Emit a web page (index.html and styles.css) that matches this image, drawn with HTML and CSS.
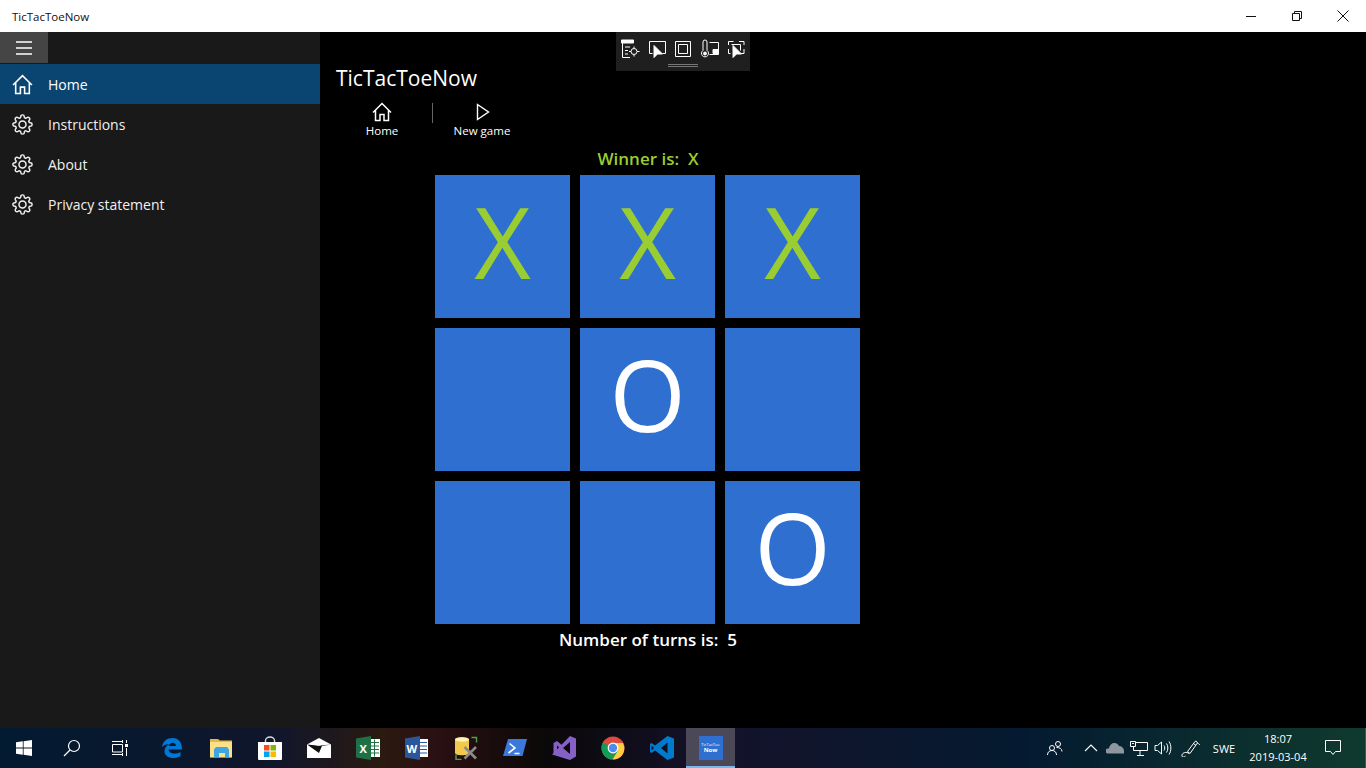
FILE: index.html
```html
<!DOCTYPE html>
<html lang="en">
  <head>
    <meta charset="utf-8" />
    <meta name="viewport" content="width=device-width, initial-scale=1" />
    <title>TicTacToeNow</title>
    <link rel="stylesheet" href="styles.css">
  </head>
  <body>
    <!-- shared icons -->
    <svg class="defs" width="0" height="0">
      <symbol id="gear" viewBox="0 0 24 24">
        <path fill="none" stroke="currentColor" stroke-width="1.7" d="M19.4 15a1.65 1.65 0 0 0 .33 1.82l.06.06a2 2 0 0 1 0 2.83 2 2 0 0 1-2.83 0l-.06-.06a1.65 1.65 0 0 0-1.82-.33 1.65 1.65 0 0 0-1 1.51V21a2 2 0 0 1-2 2 2 2 0 0 1-2-2v-.09A1.65 1.65 0 0 0 9 19.4a1.65 1.65 0 0 0-1.82.33l-.06.06a2 2 0 0 1-2.83 0 2 2 0 0 1 0-2.83l.06-.06a1.65 1.65 0 0 0 .33-1.82 1.65 1.65 0 0 0-1.51-1H3a2 2 0 0 1-2-2 2 2 0 0 1 2-2h.09A1.65 1.65 0 0 0 4.6 9a1.65 1.65 0 0 0-.33-1.82l-.06-.06a2 2 0 0 1 0-2.83 2 2 0 0 1 2.83 0l.06.06a1.65 1.65 0 0 0 1.82.33H9a1.65 1.65 0 0 0 1-1.51V3a2 2 0 0 1 2-2 2 2 0 0 1 2 2v.09a1.65 1.65 0 0 0 1 1.51 1.65 1.65 0 0 0 1.82-.33l.06-.06a2 2 0 0 1 2.83 0 2 2 0 0 1 0 2.83l-.06.06a1.65 1.65 0 0 0-.33 1.82V9a1.65 1.65 0 0 0 1.51 1H21a2 2 0 0 1 2 2 2 2 0 0 1-2 2h-.09a1.65 1.65 0 0 0-1.51 1z"/>
        <circle cx="12" cy="12" r="4" fill="none" stroke="currentColor" stroke-width="1.7"/>
      </symbol>
      <symbol id="house" viewBox="0 0 20 20">
        <path fill="none" stroke="currentColor" stroke-width="1.5" d="M1 10.5 10 1.500l9 9M3.500 8.500V18.500H8V12.500H12V18.500H16.500V8.500"/>
      </symbol>
    </svg>

    <div class="titlebar">
      <span class="app-title">TicTacToeNow</span>
      <div class="win-buttons">
        <div class="win-btn"><svg width="12" height="12" viewBox="0 0 12 12"><path d="M1 6.500h10" stroke="#111" fill="none"/></svg></div>
        <div class="win-btn"><svg width="12" height="12" viewBox="0 0 12 12"><path d="M1.500 3.500h7v7h-7zM3.500 3.500v-2h7v7h-2" stroke="#111" fill="none"/></svg></div>
        <div class="win-btn"><svg width="12" height="12" viewBox="0 0 12 12"><path d="M.5.500l11 11M11.500.500l-11 11" stroke="#111" fill="none"/></svg></div>
      </div>
    </div>

    <div class="app">
      <nav class="sidebar">
        <div class="hamburger">
          <svg width="16" height="14" viewBox="0 0 16 14"><path d="M0 1h16M0 7h16M0 13h16" stroke="#fff" stroke-width="1.500" fill="none"/></svg>
        </div>
        <a class="nav-item selected"><svg class="nav-icon" viewBox="0 0 20 20"><use href="#house"/></svg>Home</a>
        <a class="nav-item"><svg class="nav-icon"><use href="#gear"/></svg>Instructions</a>
        <a class="nav-item"><svg class="nav-icon"><use href="#gear"/></svg>About</a>
        <a class="nav-item"><svg class="nav-icon"><use href="#gear"/></svg>Privacy statement</a>
      </nav>

      <main class="content">
        <h1 class="page-title">TicTacToeNow</h1>
        <div class="commands">
          <div class="command">
            <svg width="20" height="20"><use href="#house"/></svg>
            <span>Home</span>
          </div>
          <div class="divider"></div>
          <div class="command">
            <svg width="20" height="20" viewBox="0 0 20 20"><path d="M5.500 2.500v15l11-7.500z" fill="none" stroke="#fff" stroke-width="1.400"/></svg>
            <span>New game</span>
          </div>
        </div>

        <div class="game">
          <div class="winner">Winner is:&nbsp; X</div>
          <div class="board">
            <div class="cell x">X</div>
            <div class="cell x">X</div>
            <div class="cell x">X</div>
            <div class="cell"></div>
            <div class="cell o">O</div>
            <div class="cell"></div>
            <div class="cell"></div>
            <div class="cell"></div>
            <div class="cell o">O</div>
          </div>
          <div class="turns">Number of turns is:&nbsp; 5</div>
        </div>

        <!-- debug toolbar floats over the page -->
        <div class="debug-bar">
          <div class="debug-icons">
            <svg width="20" height="20" viewBox="0 0 20 20" fill="none" stroke="#fff"><path d="M1.500 1h12v3h-12z" fill="#fff"/><path d="M2.500 4v14.500h7.500M5 8h5M5 11.500h3M5 15h3"/><circle cx="14" cy="12.500" r="3"/><path d="M14 7.500v2M14 15.500v2M9 12.500h2M17 12.500h2.500"/></svg>
            <svg width="20" height="20" viewBox="0 0 20 20" fill="none" stroke="#fff"><path d="M5.500 14.500h-3v-12h16v12h-3"/><path d="M7 6.500v12l3.500-3.500h5z" fill="#fff"/></svg>
            <svg width="20" height="20" viewBox="0 0 20 20" fill="none" stroke="#fff"><path d="M2.500 2.500h15v15h-15z"/><path d="M5.500 5.500h9v9h-9z"/></svg>
            <svg width="20" height="20" viewBox="0 0 20 20" fill="none" stroke="#fff"><path d="M3 11.500V3a2 2 0 0 1 4 0v8.500a3.500 3.500 0 1 1-4 0z"/><circle cx="5" cy="14.500" r="1.500" fill="#fff"/><path d="M9.500 3.500h9v12h-9"/><path d="M13 10.500h5v4h-5z" fill="#fff"/></svg>
            <svg width="20" height="20" viewBox="0 0 20 20" fill="none" stroke="#fff"><path d="M2.500 6V2.500h5M13 2.500h5V6M2.500 10v4.500h2M18 10v4.500h-3M5.500 5.500h9v6"/><path d="M7 6.500v12l3.500-3.500h5z" fill="#fff"/></svg>
          </div>
          <div class="grip"></div>
        </div>
      </main>
    </div>

    <footer class="taskbar">
      <div class="tb-sys">
        <svg width="16" height="16" viewBox="0 0 16 16" fill="#fff"><path d="M0 2.300 6.800 1.300v6.300H0zM7.600 1.200 16 0v7.600H7.600zM0 8.400h6.800v6.300L0 13.700zM7.600 8.400H16V16l-8.400-1.200z"/></svg>
      </div>
      <div class="tb-sys">
        <svg width="18" height="18" viewBox="0 0 18 18" fill="none" stroke="#fff" stroke-width="1.200"><circle cx="11" cy="7" r="5.500"/><path d="M7 11 1 17"/></svg>
      </div>
      <div class="tb-sys">
        <svg width="16" height="16" viewBox="0 0 16 16" fill="none" stroke="#fff"><path d="M0 1.500h10M10.500 0v3M.5 4.500h10v7.500H.5zM0 14.500h10M10.500 13v3M14.500 0v3M14.500 8v8"/><path d="M13 4h3v3h-3z" fill="#fff" stroke="none"/></svg>
      </div>

      <div class="tb-app first">
        <!-- edge -->
        <svg width="24" height="24" viewBox="0 0 24 24"><path fill="#0078d7" d="M2 11C3 5 7 2 12.500 2 18.500 2 22 6 22 13.500H8.500c.3 4 6.500 5.500 12 2.400v4.300C14 23.500 4.500 22.500 4.500 15c0-3 2-5.500 5-7-2.500 0-6 1-7.500 3zM8.800 10h7.200c0-4.500-6.500-4.500-7.200 0z"/></svg>
      </div>
      <div class="tb-app">
        <!-- explorer -->
        <svg width="24" height="24" viewBox="0 0 24 24"><path fill="#e8b83e" d="M1 3h8l2 1.500h12V8H1z"/><path fill="#fbe08a" d="M1 6h22v15H1z"/><path fill="#3ea6e0" d="M7 11h11l2 2.500V21h-4v-4H10v4H5v-7.500z"/><path fill="#d2a13c" d="M1 21h22v.8H1z"/></svg>
      </div>
      <div class="tb-app">
        <!-- store -->
        <svg width="24" height="24" viewBox="0 0 24 24"><path fill="none" stroke="#ddd" stroke-width="1.400" d="M7.500 7V4.500a4.500 3.500 0 0 1 9 0V7"/><path fill="#fff" d="M0 6h24v17a1 1 0 0 1-1 1H1a1 1 0 0 1-1-1z"/><path fill="#f25022" d="M6 9h5.500v5.500H6z"/><path fill="#7fba00" d="M12.500 9H18v5.500h-5.500z"/><path fill="#00a4ef" d="M6 15.500h5.500V21H6z"/><path fill="#ffb900" d="M12.500 15.500H18V21h-5.500z"/></svg>
      </div>
      <div class="tb-app">
        <!-- mail -->
        <svg width="24" height="24" viewBox="0 0 24 24"><path fill="#fff" d="M0 8.500 12 2l12 6.500V22H0z"/><path fill="#111" d="M0 8.500 12 17l3-7zM24 8.500 15 10H8z"/></svg>
      </div>
      <div class="tb-app">
        <!-- excel -->
        <svg width="24" height="24" viewBox="0 0 24 24"><path fill="#fff" d="M13 3h11v18H13z"/><path fill="none" stroke="#1f7145" d="M14 6.500h9M14 10h9M14 13.500h9M14 17h9M18.500 3.500v17"/><path fill="#1f7145" d="M0 2.500 15 0v24L0 21.500z"/><text class="icon-letter" x="3.500" y="16.500">X</text></svg>
      </div>
      <div class="tb-app">
        <!-- word -->
        <svg width="24" height="24" viewBox="0 0 24 24"><path fill="#fff" d="M13 3h10v18H13z"/><path fill="none" stroke="#2b579a" d="M14 6.500h8M14 10h8M14 13.500h8M14 17h8"/><path fill="#2b579a" d="M0 2.500 15 0v24L0 21.500z"/><text class="icon-letter" x="1.500" y="16.500">W</text></svg>
      </div>
      <div class="tb-app">
        <!-- sql tools -->
        <svg width="24" height="24" viewBox="0 0 24 24"><path fill="#f2c94c" d="M1 3.500C1 .5 15 .5 15 3.500V17C15 20 1 20 1 17z"/><ellipse cx="8" cy="3.500" rx="7" ry="2.200" fill="#fff3b0"/><path fill="none" stroke="#4aa54a" stroke-width="1.400" d="M17.500 1.500h5v5M2 18.500v5h5.500"/><path fill="none" stroke="#8a8a8a" stroke-width="2.600" d="M10.500 22.500 22 11M10.500 11 22 22.500"/></svg>
      </div>
      <div class="tb-app">
        <!-- powershell -->
        <svg width="24" height="24" viewBox="0 0 24 24"><path fill="#3b78dc" d="M5 3h19l-4.500 17H0z"/><path fill="none" stroke="#fff" stroke-width="1.600" d="M6.500 7.500 12 12l-6.500 5M11.500 17.500h5"/></svg>
      </div>
      <div class="tb-app">
        <!-- visual studio -->
        <svg width="24" height="24" viewBox="0 0 24 24"><path fill="#8661c5" d="M18 0l6 2.500v18L18 24 0 18.500zM18 6l-7 6 7 6z"/><path fill="#8661c5" d="M1.500 7 5 5l6 5-2.500 2.500L5 9.500v5l3.500-2 2.500 2.500-6 4.500-3.500-2z"/></svg>
      </div>
      <div class="tb-app">
        <!-- chrome -->
        <svg width="24" height="24" viewBox="0 0 24 24"><circle cx="12" cy="12" r="11.500" fill="#dd4b3e"/><path fill="#ffcd40" d="M12 12h11.300C23.600 19 18 23.500 12 23.500z"/><path fill="#ffcd40" d="M12 7h10l1.500 5H12z"/><path fill="#109d58" d="M1.800 6.700 12 12l-.5 11.500C5 23.300.500 18 .500 12c0-2 .5-3.700 1.300-5.300z"/><path fill="#109d58" d="m12 12 5 2.500-5.500 9z"/><circle cx="12" cy="12" r="5.400" fill="#fff"/><circle cx="12" cy="12" r="4.200" fill="#4a8cf0"/></svg>
      </div>
      <div class="tb-app">
        <!-- vscode -->
        <svg width="24" height="24" viewBox="0 0 24 24"><path fill="#007acc" d="M17.500 0 24 2.500v19L17.500 24 5 14.500 1.500 17 0 16V8l1.500-1L5 9.500zM17.500 6.500 11 12l6.500 5.500zM1.500 9.500v5L4 12z"/></svg>
      </div>
      <div class="tb-app active">
        <div class="app-tile"><span class="tile-small">TicTacToe</span><span class="tile-big">Now</span></div>
      </div>

      <div class="tray">
        <div class="tray-item people">
          <svg width="16" height="16" viewBox="0 0 16 16" fill="none" stroke="#fff"><circle cx="5" cy="8" r="2.500"/><path d="M.5 15c0-3 2-4.500 4.500-4.500S9.500 12 9.500 15"/><circle cx="11" cy="4" r="2.500"/><path d="M9.500 7.500c3 0 5.500 1 5.500 4"/></svg>
        </div>
        <div class="tray-item">
          <svg width="14" height="14" viewBox="0 0 14 14" fill="none" stroke="#fff" stroke-width="1.100"><path d="M1 10 7 4l6 6"/></svg>
        </div>
        <div class="tray-item">
          <svg width="18" height="14" viewBox="0 0 18 14" fill="#8e979e"><path d="M2 12.500a2.500 2.500 0 0 1 0-5h1C3.500 4 6 2 8.500 2c2 0 3.500 1 4.500 3 2.500 0 4.500 1.500 5 4.500v3z"/></svg>
        </div>
        <div class="tray-item">
          <svg width="18" height="16" viewBox="0 0 18 16" fill="none" stroke="#fff"><path d="M5.500 2.500h12v8h-14V7M7 15.500h7M10 10.500v5"/><path d="M.5 1.500h5v5h-5z"/><path d="M2 3.500h2" /></svg>
        </div>
        <div class="tray-item">
          <svg width="18" height="16" viewBox="0 0 18 16" fill="none" stroke="#fff"><path d="M1 5.500h2.500L7.500 2v12l-4-3.500H1zM10 5.500c1 1.500 1 3.500 0 5M12.500 3.500c1.800 2.500 1.800 6.500 0 9M15 1.500c2.500 3.500 2.500 9.500 0 13"/></svg>
        </div>
        <div class="tray-item pen">
          <svg width="20" height="18" viewBox="0 0 20 18" fill="none" stroke="#fff"><path d="M6.500 12.500 14 2.500c1-1 3 .5 2 2L9 14.500zM12.500 4.500l2.500 2M16 4c1 0 2 1 3 2"/><path d="M8 14.500c-2.500-2-6.500-1-7 1.500s2 2.500 3.500 1"/></svg>
        </div>
        <div class="tray-text lang">SWE</div>
        <div class="tray-text clock">
          <span>18:07</span>
          <span>2019-03-04</span>
        </div>
        <div class="tray-item notify">
          <svg width="17" height="16" viewBox="0 0 17 16" fill="none" stroke="#fff"><path d="M.5.500h15v11h-5l-2.500 3-2.500-3h-5z"/></svg>
        </div>
        <div class="show-desktop"></div>
      </div>
    </footer>
  </body>
</html>
```

FILE: styles.css
```css
* {
    box-sizing: border-box;
}

html, body {
    height: 100%;
}

body {
    margin: 0;
    display: flex;
    flex-direction: column;
    overflow: hidden;
    background-color: #000;
    color: #fff;
    font-family: "Open Sans", "Noto Sans", sans-serif;
}

.defs {
    position: absolute;
}

/* window title bar */
.titlebar {
    height: 32px;
    flex: none;
    display: flex;
    align-items: center;
    justify-content: space-between;
    background-color: #fff;
    color: #111;
    padding-left: 12px;
}

.app-title {
    font-size: 11.500px;
}

.win-buttons {
    display: flex;
}

.win-btn {
    width: 46px;
    height: 32px;
    display: flex;
    align-items: center;
    justify-content: center;
}

/* sidebar + page */
.app {
    flex: 1;
    display: flex;
    min-height: 0;
}

.sidebar {
    width: 320px;
    flex: none;
    background-color: #191919;
}

.hamburger {
    width: 48px;
    height: 31px;
    margin-bottom: 1px;
    display: flex;
    align-items: center;
    justify-content: center;
    background-color: #454545;
}

.nav-item {
    height: 40px;
    display: flex;
    align-items: center;
    gap: 15px;
    padding-left: 12px;
    font-size: 14px;
    color: #f0f0f0;
}

.nav-item.selected {
    background-color: #0a4572;
    color: #fff;
}

.nav-icon {
    width: 21px;
    height: 21px;
}

.content {
    flex: 1;
    position: relative;
    padding-left: 16px;
}

.page-title {
    margin: 32px 0 0;
    height: 28px;
    line-height: 28px;
    font-size: 21px;
    font-weight: 400;
}

.commands {
    display: flex;
    align-items: flex-start;
    height: 46px;
    margin-top: 10px;
}

.command {
    width: 92px;
    display: flex;
    flex-direction: column;
    align-items: center;
    font-size: 11.500px;
    line-height: 17px;
}

.command svg {
    display: block;
    height: 20px;
}

.divider {
    width: 1px;
    height: 20px;
    margin: 1px 3px 0 4px;
    background-color: #666;
}

/* game board */
.game {
    width: 426px;
    margin-left: 99px;
    margin-top: -5px;
}

.winner {
    height: 32px;
    line-height: 32px;
    text-align: center;
    font-size: 17px;
    font-weight: 600;
    color: #9acd32;
}

.board {
    display: grid;
    grid-template-columns: repeat(3, 135px);
    grid-auto-rows: 143px;
    gap: 10px;
}

.cell {
    display: flex;
    align-items: center;
    justify-content: center;
    padding-bottom: 12px;
    background-color: #2e6fd0;
    font-size: 98px;
    line-height: 1;
}

.cell.x {
    color: #9acd32;
}

.cell.o {
    color: #fff;
}

.turns {
    height: 32px;
    line-height: 32px;
    text-align: center;
    font-size: 17px;
    font-weight: 600;
}

/* floating debug toolbar */
.debug-bar {
    position: absolute;
    left: 296px;
    top: 0;
    width: 134px;
    height: 39px;
    background-color: #1f1f1f;
}

.debug-icons {
    display: flex;
    gap: 6.500px;
    padding: 7px 0 0 4px;
}

.grip {
    width: 30px;
    height: 3px;
    margin: 5px auto 0;
    border-top: 1px solid #777;
    border-bottom: 1px solid #777;
}

/* windows taskbar */
.taskbar {
    height: 40px;
    flex: none;
    display: flex;
    align-items: center;
    background: linear-gradient(90deg, #021a30 0%, #10162c 20%, #2a1a10 28%, #2a1012 32%, #0a0808 40%, #14122a 52%, #041a30 75%, #0f3a2e 100%);
}

.tb-sys {
    width: 48px;
    height: 40px;
    display: flex;
    align-items: center;
    justify-content: center;
}

.tb-app {
    width: 49px;
    height: 40px;
    display: flex;
    align-items: center;
    justify-content: center;
}

.tb-app.first {
    margin-left: 3px;
}

.tb-app.active {
    background-color: #4b4858;
    border-bottom: 2px solid #76b9ed;
    padding-top: 2px;
}

.icon-letter {
    font-family: "Open Sans", sans-serif;
    font-size: 11px;
    font-weight: 700;
    fill: #fff;
}

.app-tile {
    width: 24px;
    height: 24px;
    display: flex;
    flex-direction: column;
    align-items: center;
    justify-content: center;
    background-color: #2e6fd0;
    line-height: 1;
}

.tile-small {
    font-size: 4px;
}

.tile-big {
    font-size: 6px;
    font-weight: 700;
}

.tray {
    margin-left: auto;
    display: flex;
    align-items: center;
    height: 40px;
}

.tray-item {
    width: 24px;
    height: 40px;
    display: flex;
    align-items: center;
    justify-content: center;
}

.tray-item.people {
    margin-right: 12px;
}

.tray-item.pen {
    width: 32px;
}

.tray-item.notify {
    width: 36px;
}

.tray-text {
    font-size: 11px;
    text-align: center;
}

.lang {
    width: 34px;
}

.clock {
    width: 74px;
    display: flex;
    flex-direction: column;
    line-height: 18px;
}

.show-desktop {
    width: 15px;
    height: 40px;
    border-right: 1px solid #3c5a58;
}
```
